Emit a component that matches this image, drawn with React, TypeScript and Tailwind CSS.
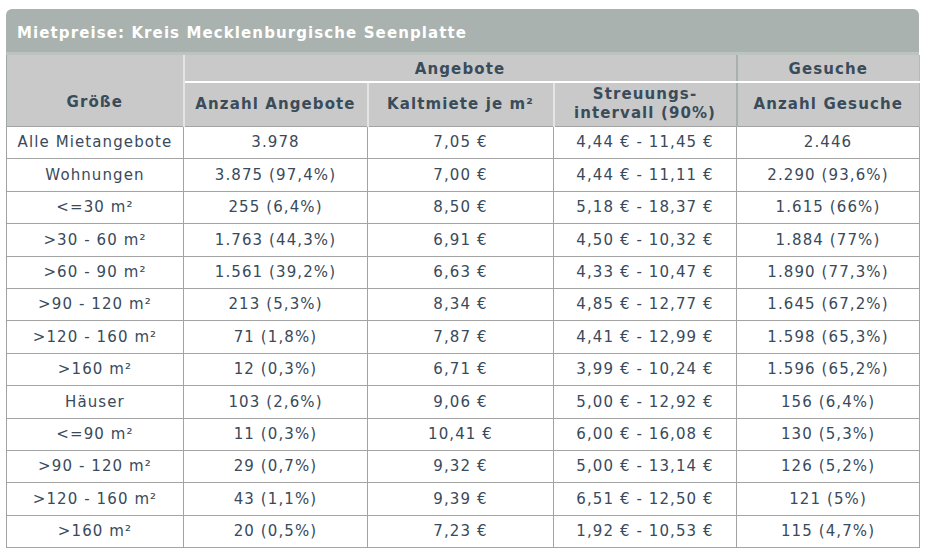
import React from "react";

const rows: string[][] = [
  ["Alle Mietangebote", "3.978", "7,05 €", "4,44 € - 11,45 €", "2.446"],
  ["Wohnungen", "3.875 (97,4%)", "7,00 €", "4,44 € - 11,11 €", "2.290 (93,6%)"],
  ["<=30 m²", "255 (6,4%)", "8,50 €", "5,18 € - 18,37 €", "1.615 (66%)"],
  [">30 - 60 m²", "1.763 (44,3%)", "6,91 €", "4,50 € - 10,32 €", "1.884 (77%)"],
  [">60 - 90 m²", "1.561 (39,2%)", "6,63 €", "4,33 € - 10,47 €", "1.890 (77,3%)"],
  [">90 - 120 m²", "213 (5,3%)", "8,34 €", "4,85 € - 12,77 €", "1.645 (67,2%)"],
  [">120 - 160 m²", "71 (1,8%)", "7,87 €", "4,41 € - 12,99 €", "1.598 (65,3%)"],
  [">160 m²", "12 (0,3%)", "6,71 €", "3,99 € - 10,24 €", "1.596 (65,2%)"],
  ["Häuser", "103 (2,6%)", "9,06 €", "5,00 € - 12,92 €", "156 (6,4%)"],
  ["<=90 m²", "11 (0,3%)", "10,41 €", "6,00 € - 16,08 €", "130 (5,3%)"],
  [">90 - 120 m²", "29 (0,7%)", "9,32 €", "5,00 € - 13,14 €", "126 (5,2%)"],
  [">120 - 160 m²", "43 (1,1%)", "9,39 €", "6,51 € - 12,50 €", "121 (5%)"],
  [">160 m²", "20 (0,5%)", "7,23 €", "1,92 € - 10,53 €", "115 (4,7%)"],
];

export default function App() {
  return (
    <div
      className="w-[929px] h-[554px] bg-white pt-[9px] pl-[6px]"
      style={{ fontFamily: '"DejaVu Sans", Verdana, sans-serif' }}
    >
      <div className="w-[913px]">
        <div className="h-[46px] rounded-t-[6px] bg-[#a9b2ae] border-b-[3px] border-[#bcc4c0] flex items-center pl-[11px] pt-[6px]">
          <span className="text-white font-bold text-[15px] tracking-[1.1px]">
            Mietpreise: Kreis Mecklenburgische Seenplatte
          </span>
        </div>
        <table className="w-[913px] border-collapse table-fixed text-[15px] tracking-[1.1px] text-[#384a5c]">
          <colgroup>
            <col className="w-[177px]" />
            <col className="w-[184px]" />
            <col className="w-[186px]" />
            <col className="w-[183px]" />
            <col className="w-[183px]" />
          </colgroup>
          <thead>
            <tr className="h-[25px] bg-[#c9c9c9]">
              <th
                rowSpan={2}
                className="border-l border-[#a0a8a6] border-r-2 border-r-[#e4e4e4] font-bold text-[#3a4c5a] align-middle pt-[24px]"
              >
                Größe
              </th>
              <th colSpan={3} className="font-bold text-[#3a4c5a] border-b-2 border-b-white pt-[3px]">
                Angebote
              </th>
              <th className="font-bold text-[#3a4c5a] border-l-2 border-l-[#a8b0ae] border-b-2 border-b-white border-r border-r-[#b8b8b8] pt-[3px]">
                Gesuche
              </th>
            </tr>
            <tr className="h-[45px] bg-[#c9c9c9]">
              <th className="font-bold text-[#3a4c5a] border-r-2 border-r-[#e4e4e4] leading-[17px]">
                Anzahl Angebote
              </th>
              <th className="font-bold text-[#3a4c5a] border-r-2 border-r-[#e4e4e4] leading-[17px]">
                Kaltmiete je m²
              </th>
              <th className="font-bold text-[#3a4c5a] leading-[19px]">
                Streuungs-
                <br />
                intervall (90%)
              </th>
              <th className="font-bold text-[#3a4c5a] border-l-2 border-l-[#a8b0ae] border-r border-r-[#b8b8b8] leading-[17px]">
                Anzahl Gesuche
              </th>
            </tr>
          </thead>
          <tbody>
            {rows.map((r, i) => (
              <tr key={i} className="h-[32.4px] bg-white">
                {r.map((c, j) => (
                  <td
                    key={j}
                    className={
                      "text-center border border-[#a3a3a3] p-0 " +
                      (j === 4 ? "border-l-[#777]" : "")
                    }
                  >
                    {c}
                  </td>
                ))}
              </tr>
            ))}
          </tbody>
        </table>
      </div>
    </div>
  );
}
